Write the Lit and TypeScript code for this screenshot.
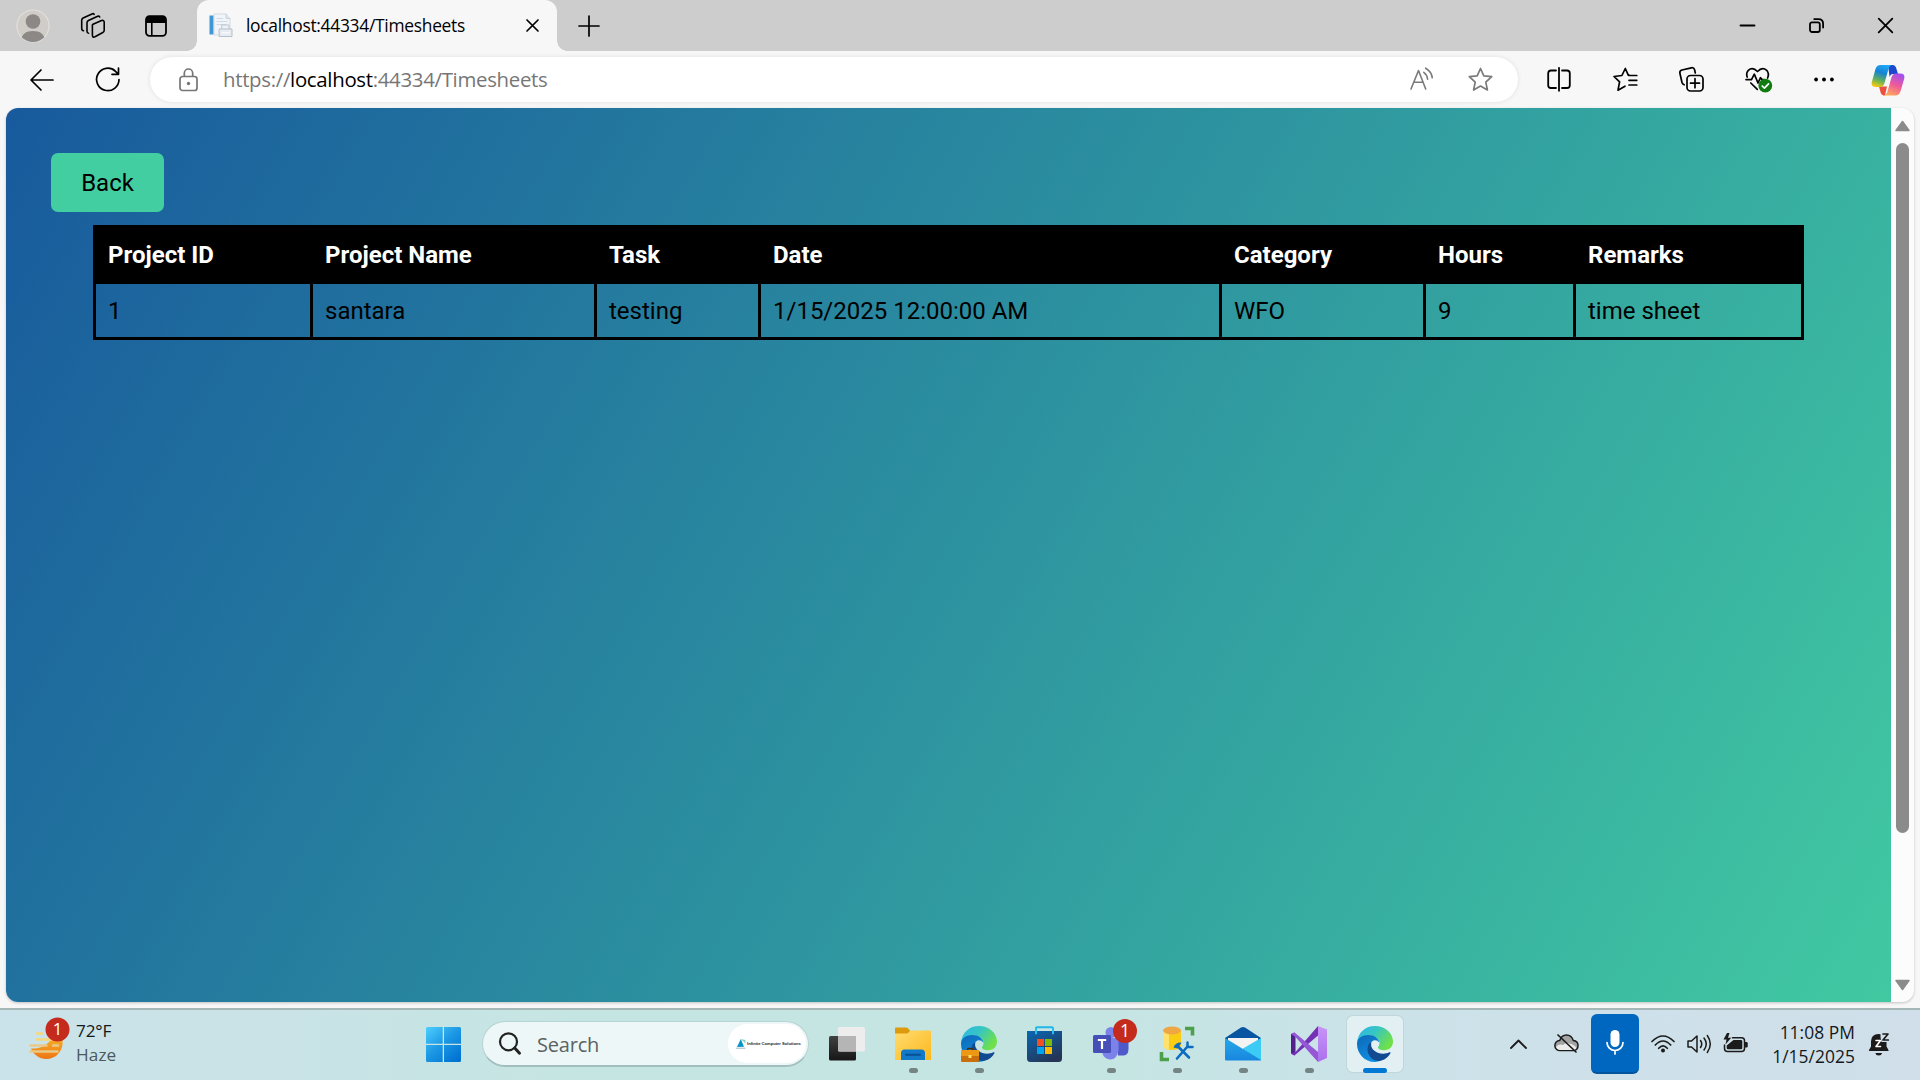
import { LitElement, html, css, svg, TemplateResult } from "lit";
import { customElement } from "lit/decorators.js";

const icon = (w: number, h: number, body: TemplateResult) =>
  html`<svg width=${w} height=${h} viewBox="0 0 ${w} ${h}" fill="none" stroke-linecap="round" stroke-linejoin="round">${body}</svg>`;

const base = css`
  :host { display: block; box-sizing: border-box; font-family: "Open Sans", "Noto Sans", sans-serif; color: #000; }
  * { box-sizing: border-box; }
  svg { display: block; flex: none; overflow: visible; }
`;

/* ---------- title bar and address bar ---------- */

@customElement("browser-chrome")
class BrowserChrome extends LitElement {
  static styles = [base, css`
    .titlebar { display: flex; height: 51px; background: #cdcdcd; }
    .lead { display: flex; width: 197px; padding-left: 15px; align-items: center; }
    .lead .slot { display: flex; justify-content: center; }
    .avatar { width: 36px; }
    .spaces { width: 84px; }
    .tabs { width: 42px; }
    .tab { position: relative; display: flex; align-items: center; width: 360px; padding: 0 18px 0 11px; background: #f7f7f7; border-radius: 12px 12px 0 0; }
    .tab::before, .tab::after { content: ""; position: absolute; bottom: 0; width: 10px; height: 10px; }
    .tab::before { left: -10px; background: radial-gradient(circle at 0 0, transparent 9.5px, #f7f7f7 10px); }
    .tab::after { right: -10px; background: radial-gradient(circle at 100% 0, transparent 9.5px, #f7f7f7 10px); }
    .title { margin-left: 13px; flex: 1; font-size: 17.4px; letter-spacing: -0.28px; line-height: 51px; white-space: nowrap; }
    .plus { display: flex; align-items: center; margin-left: 21px; }
    .controls { display: flex; margin-left: auto; }
    .controls div { width: 69px; display: flex; align-items: center; justify-content: center; }
    .toolbar { display: flex; height: 57px; background: #f7f7f7; align-items: center; }
    .nav { display: flex; width: 150px; padding-left: 30px; gap: 42px; align-items: center; }
    .address { display: flex; align-items: center; width: 1368px; height: 45px; padding: 0 25px 0 29px; border-radius: 23px; background: #fff; box-shadow: 0 0 5px #00000018; }
    .url { margin-left: 25px; flex: 1; font-size: 20.4px; letter-spacing: -0.31px; line-height: 45px; color: #767676; white-space: nowrap; }
    .url b { font-weight: 400; color: #000; }
    .read { margin-right: 34px; }
    .actions { display: flex; margin-left: 8px; }
    .actions div { width: 66.300px; display: flex; align-items: center; justify-content: center; }
    .actions div:last-child { width: 61px; }
  `];

  render() {
    return html`
      <div class="titlebar">
        <div class="lead">
          <div class="slot avatar">${icon(34, 34, svg`
            <defs><clipPath id="av"><circle cx="17" cy="17" r="16"/></clipPath></defs>
            <circle cx="17" cy="17" r="16" fill="#d0cdc9" stroke="#e3e0dc" stroke-width="1.2"/>
            <g clip-path="url(#av)" fill="#8c8885"><circle cx="17" cy="12.5" r="7.3"/><path d="M4.500 35c0-9.500 5-13 12.500-13s12.500 3.500 12.500 13z"/></g>`)}</div>
          <div class="slot spaces">${icon(26, 26, svg`
            <g stroke="#000" stroke-width="1.6">
              <path d="M12.500 11.500 21.500 7.600q2.700-.8 2.700 1.700v7.900q0 1.600-1.400 2.300l-7.800 4.300q-2.600 1.100-2.600-1.500v-8.600q0-1.500.1-2.200z"/>
              <path d="M8.600 20.300q-1.600-.1-1.600-2V9.800q0-1.600 1.400-2.300l9.300-4.300q1.400-.5 2 .8"/>
              <path d="M3.500 17.700Q1.700 17.500 1.700 15.300V7.300q0-1.600 1.400-2.300L12 .9q1.500-.6 2.100.5"/>
            </g>`)}</div>
          <div class="slot tabs">${icon(22, 22, svg`
            <rect x="1" y="1.200" width="20" height="19.600" rx="3.500" stroke="#000" stroke-width="1.8"/>
            <path d="M1 8V4.500Q1 1 4.500 1h13Q21 1 21 4.500V8z" fill="#000"/><path d="M6.800 8v12.500" stroke="#000" stroke-width="1.600"/>`)}</div>
        </div>
        <div class="tab">
          ${icon(25, 25, svg`
            <rect x="1.500" y="2.500" width="4" height="19" fill="#3f98d3"/>
            <path d="M6.500 1H18l4 4.500V22H6.500z" fill="#f1f5f9" stroke="#ccd4dc" stroke-width=".8"/>
            <path d="M18 1v4.500h4" fill="#dfe6ee" stroke="#c3ccd6" stroke-width=".8"/>
            <path d="M9 5.500h6M9 8.500h10M9 11.500h9" stroke="#d0dae5" stroke-width="1.200"/>
            <rect x="14" y="12" width="7" height="6" fill="#edf1f5" stroke="#b5bec9" stroke-width=".8"/>
            <rect x="11.500" y="16" width="12.500" height="7.500" fill="#e7ecf2" stroke="#b0bac6" stroke-width=".9"/>
            <path d="M14 19.800h7.500" stroke="#fff"/>`)}
          <span class="title">localhost:44334/Timesheets</span>
          ${icon(13, 13, svg`<path d="M1 1l11 11M12 1 1 12" stroke="#000" stroke-width="1.700"/>`)}
        </div>
        <div class="plus">${icon(22, 22, svg`<path d="M11 1v20M1 11h20" stroke="#000" stroke-width="1.700"/>`)}</div>
        <div class="controls">
          <div>${icon(15, 15, svg`<path d="M.5 7.500h14" stroke="#000" stroke-width="1.800"/>`)}</div>
          <div>${icon(15, 15, svg`<g stroke="#000" stroke-width="1.800"><rect x="1" y="4.300" width="9.800" height="9.700" rx="2"/><path d="M5.200 1.100h4.300q4.600 0 4.600 4.600v3.800"/></g>`)}</div>
          <div>${icon(15, 15, svg`<path d="M.7.700l13.600 13.600M14.300.700.700 14.300" stroke="#000" stroke-width="1.800"/>`)}</div>
        </div>
      </div>
      <div class="toolbar">
        <div class="nav">
          ${icon(24, 22, svg`<path d="M23 11H1.500M11 1 1 11l10 10" stroke="#000" stroke-width="1.700"/>`)}
          ${icon(25, 25, svg`<path d="M23 12.500A11.200 11.200 0 1 1 19.500 4.300L22.200 7M22.500 1v6.300h-6.500" stroke="#000" stroke-width="1.700"/>`)}
        </div>
        <div class="address">
          ${icon(19, 24, svg`<rect x="1" y="8.500" width="17" height="14" rx="2.500" stroke="#767676" stroke-width="1.700"/><path d="M5.300 8V5.200a4.200 4.200 0 0 1 8.400 0V8" stroke="#767676" stroke-width="1.700"/><circle cx="9.500" cy="15.500" r="1.700" fill="#767676"/>`)}
          <span class="url">https://<b>localhost</b>:44334/Timesheets</span>
          <span class="read">${icon(24, 24, svg`<g stroke="#7a7a7a" stroke-width="1.600"><path d="M1 21 8.500 2.500 15.700 21M3.800 14.300h9.400"/><path d="M12.500 4.300q3.400 2.400 3.800 7M14.300.2q5.900 3.300 6.700 9.600" transform="translate(1.300 0)"/></g>`)}</span>
          ${icon(25, 25, svg`<path d="M12.500 1.500 15.800 8.800 23.700 9.700 17.800 15.200 19.400 23 12.500 19.100 5.600 23 7.200 15.200 1.300 9.700 9.200 8.800z" stroke="#7a7a7a" stroke-width="1.700"/>`)}
        </div>
        <div class="actions">
          <div>${icon(24, 25, svg`<g stroke="#000" stroke-width="1.800"><path d="M9 3.500H4Q1.200 3.500 1.200 6.300v11.900q0 2.800 2.800 2.800h5M15 3.500h5q2.800 0 2.800 2.800v11.900q0 2.800-2.800 2.800h-5"/><path d="M12 .8v23"/></g>`)}</div>
          <div>${icon(25, 25, svg`<path d="M15.800 8 15.300 8.200 12.300 1.500 8.900 8.500 1 9.500 6.600 14.900 5 23.200 12 19.200M16 8.500h7.800M16 13.300h7.800M16 18h7.800" stroke="#000" stroke-width="1.700"/>`)}</div>
          <div>${icon(25, 25, svg`<g stroke="#000" stroke-width="1.700"><path d="M5.200 17.800Q3.500 17.300 3 15.500L.9 6.300Q.4 3.700 3 3L12.300.8q2.600-.5 3.300 2L16.300 6"/><rect x="8" y="8.500" width="16" height="15.500" rx="3.500"/><path d="M16 11.700v9M11.500 16.200h9"/></g>`)}</div>
          <div>${icon(27, 26, svg`<g stroke="#000" stroke-width="1.700"><path d="M2.200 10Q.8 6 3.300 3.300 7.700-.6 12.500 4.500 17.300-.6 21.700 3.300 24.500 6.500 22.600 11"/><path d="M1 12.600h5.500L9.300 7.200 13 16 15.500 10.700 17 12.600h2.200M5.800 16 12.300 22.300"/></g><circle cx="20.300" cy="18.700" r="6.900" fill="#107c10"/><path d="M17.200 19l2.200 2.100 4.100-4.300" stroke="#fff" stroke-width="1.700"/>`)}</div>
          <div>${icon(20, 6, svg`<g fill="#000"><circle cx="2.100" cy="2.500" r="1.900"/><circle cx="10" cy="2.500" r="1.900"/><circle cx="17.900" cy="2.500" r="1.900"/></g>`)}</div>
          <div>${icon(34, 32, svg`
            <defs>
              <linearGradient id="c1" x1=".6" y1="0" x2=".3" y2="1"><stop stop-color="#1ea8f4"/><stop offset=".35" stop-color="#1682d4"/><stop offset=".7" stop-color="#62b25b"/><stop offset="1" stop-color="#f5c90e"/></linearGradient>
              <linearGradient id="c2" x1=".7" y1="0" x2=".3" y2="1"><stop stop-color="#a34ff0"/><stop offset=".5" stop-color="#ee5a9a"/><stop offset="1" stop-color="#ffa85a"/></linearGradient>
            </defs>
            <path d="M17 1h5q2.200 0 3 2.500l2 6.500h-5q-2.500 0-3.400 3z" fill="#1b48cc"/>
            <path d="M8 22.500h8L14 31.500q-3.500 0-4.300-2.800z" fill="#ec5140"/>
            <path d="M9.500 1H21q-2.500.5-3.500 4l-4 14q-1.100 4-4.300 4H4.800Q-.3 23 .8 18L4.500 5Q5.800 1 9.500 1z" fill="url(#c1)"/>
            <path d="M24.500 31.500H12.500q3-.5 4-4L20.500 13.300q1.200-3.800 4.500-3.800H29q5.500 0 4.200 5.200l-3.700 12.600q-1.300 4.200-5 4.200z" fill="url(#c2)"/>`)}</div>
        </div>
      </div>`;
  }
}

/* ---------- page shown in the browser ---------- */

interface Entry { id: string; name: string; task: string; date: string; category: string; hours: string; remarks: string; }

@customElement("timesheet-page")
class TimesheetPage extends LitElement {
  static styles = [base, css`
    :host { padding: 0 6px 6px; background: #f7f7f7; height: 900px; }
    .view { display: flex; height: 894px; border-radius: 12px; overflow: hidden; background: #fcfcfc; box-shadow: 0 1px 3px #00000038; }
    .page { width: 1885px; overflow: hidden; }
    .canvas { height: 1084px; padding: 45px; background: linear-gradient(120deg, #185a9d, #43cea2); font-family: Roboto, sans-serif; font-size: 24px; }
    .back { display: block; width: 113px; height: 59px; padding: 0; border: 0; border-radius: 7px; background: #43cea2; font: inherit; color: #000; }
    .table { display: grid; grid-template-columns: 217px 284px 164px 461px 204px 150px 231px; width: 1711px; margin: 13px 0 0 42px; }
    .th { height: 59px; padding-left: 15px; line-height: 60px; background: #000; color: #fff; font-weight: 700; }
    .td { height: 56px; padding-left: 12px; line-height: 55px; border: solid #000; border-width: 0 0 3px 3px; }
    .td:last-child { border-right-width: 3px; }
    .scroll { display: flex; flex-direction: column; align-items: center; width: 23px; padding: 12px 0 11px; }
    .thumb { width: 13px; height: 690px; margin: 11px 0 auto; border-radius: 7px; background: #8b8b8b; }
  `];

  private entries: Entry[] = [
    { id: "1", name: "santara", task: "testing", date: "1/15/2025 12:00:00 AM", category: "WFO", hours: "9", remarks: "time sheet" },
  ];

  render() {
    const heads = ["Project ID", "Project Name", "Task", "Date", "Category", "Hours", "Remarks"];
    return html`
      <div class="view">
        <div class="page"><div class="canvas">
          <button class="back">Back</button>
          <div class="table">
            ${heads.map((h) => html`<div class="th">${h}</div>`)}
            ${this.entries.map((e) => [e.id, e.name, e.task, e.date, e.category, e.hours, e.remarks].map((v) => html`<div class="td">${v}</div>`))}
          </div>
        </div></div>
        <div class="scroll">
          ${icon(15, 12, svg`<path d="M7.500 1.500 14 10.500H1z" fill="#8b8b8b" stroke="#8b8b8b" stroke-width="1.500"/>`)}
          <div class="thumb"></div>
          ${icon(15, 12, svg`<path d="M7.500 10.500 14 1.500H1z" fill="#8b8b8b" stroke="#8b8b8b" stroke-width="1.500"/>`)}
        </div>
      </div>`;
  }
}

/* ---------- taskbar ---------- */

const edgeArt = (p: string) => svg`
  <defs>
    <linearGradient id="${p}a" x1="0" y1="0" x2="1" y2=".5"><stop stop-color="#2fb5e8"/><stop offset=".5" stop-color="#36c6c4"/><stop offset="1" stop-color="#6fe04a"/></linearGradient>
    <linearGradient id="${p}b" x1="0" y1="0" x2=".5" y2="1"><stop stop-color="#0d68b8"/><stop offset="1" stop-color="#0f8fe0"/></linearGradient>
  </defs>
  <path d="M0 17C1 6 8.500 0 18 0c10.500 0 18 7.500 18 15.500 0 5.500-4 8.700-8.700 8.700-3.600 0-6.300-1.200-6.300-2.700 0-1 1.500-1.600 1.500-4.200 0-4-4-7.800-9.300-7.800C7 9.500 1.500 12.500 0 17z" fill="url(#${p}a)"/>
  <path d="M0 18C0 12 5.500 9 11.500 9c6 0 10.500 3.500 10.800 7.600C21 14.500 18.500 13.700 16.500 14.400c-3 1.300-4 4.300-3.600 7.600.7 6 5.600 10.600 12.100 11.800C22.500 35.500 20 36 17.500 36 8 36 0 28 0 18z" fill="url(#${p}b)"/>
  <path d="M14.500 16c-4 2-5 7-3 12 2.300 5.500 8 8 13 6.600 4-1.200 7-4 8.800-7.200.5-1-.2-1.500-1-1.100-2 1-3.800 1.400-6 1.400-7 0-12.500-4.700-12.200-9.200 0-1 .1-1.700.4-2.500z" fill="#114a91"/>`;

@customElement("task-bar")
class TaskBar extends LitElement {
  static styles = [base, css`
    :host { display: flex; align-items: stretch; height: 72px; border-top: 2px solid #a6b7b8; color: #14181a;
      background: linear-gradient(90deg, #cae3ea 0%, #c9e3e6 15%, #c5e5e2 30%, #c5e5e3 58%, #c9e3e7 68%, #cde1e9 78%, #d0dfe9 100%); }
    .weather { display: flex; width: 410px; padding-left: 29px; }
    .weather svg { margin-top: 7px; }
    .lines { margin-left: 11px; padding-top: 9px; font-size: 17.200px; line-height: 24px; letter-spacing: -0.15px; }
    .haze { color: #4d595c; letter-spacing: 0.1px; }
    .start { display: flex; align-items: center; width: 72px; padding: 0 0 1px 16px; }
    .search { display: flex; align-items: center; width: 327px; height: 46px; margin-top: 11px; padding: 0 2px 0 16px; border-radius: 23px; background: #eef7f7; border: 1px solid #b7d3d3; border-bottom: 2px solid #a2bebe; }
    .search .label { margin-left: 16px; flex: 1; padding-top: 2px; color: #5a6262; font-size: 20px; letter-spacing: -0.2px; line-height: 42px; }
    .brand { display: flex; align-items: center; gap: 1px; flex: none; width: 78px; height: 39px; padding-left: 8px; border-radius: 20px; background: #fff; font: 700 4.100px "Liberation Sans", sans-serif; color: #222; white-space: nowrap; }
    .apps { display: flex; margin-left: 5px; }
    .app { position: relative; display: flex; align-items: center; justify-content: center; width: 66px; }
    .run::after { content: ""; position: absolute; bottom: 7px; width: 9px; height: 5px; border-radius: 3px; background: #748583; }
    .active::before { content: ""; position: absolute; top: 6px; left: 5px; width: 56px; height: 56px; border-radius: 6px; background: #e3f0f3; box-shadow: 0 0 0 1px #c1d6d9; }
    .active::after { width: 24px; background: #0078d4; }
    .app svg { position: relative; top: -1px; }
    .app .store { padding-right: 1px; }
    .tray { display: flex; align-items: center; margin-left: 102px; }
    .tray svg { position: relative; top: -1px; }
    .more { margin-right: 27px; }
    .mic { display: flex; align-items: center; justify-content: center; width: 48px; height: 60px; margin: 0 12px; margin-top: -2px; border-radius: 6px; background: #0067c0; border-bottom: 2px solid #00539c; }
    .status { display: flex; align-items: center; gap: 12px; }
    .clock { width: 107px; padding-bottom: 3px; text-align: right; font-size: 17.400px; line-height: 24px; letter-spacing: 0.05px; }
    .bell { margin-left: 13px; }
  `];

  render() {
    return html`
      <div class="weather">
        ${icon(36, 46, svg`
          <defs><linearGradient id="sun" x1="0" y1="0" x2="0" y2="1"><stop stop-color="#f6bc2d"/><stop offset="1" stop-color="#ee7414"/></linearGradient></defs>
          <path d="M20 25Q24 19 31 17q4 6 2 13c-2 7-8 12-15.500 12S4 37 2 31.500q10 1 18-6.500z" fill="url(#sun)"/>
          <path d="M8 16.500h5M8 22.500h15" stroke="#f7d77b" stroke-width="2.400"/><path d="M1.500 28.500h16M24 28.500h5M1.500 34.500h27" stroke="#eac988" stroke-width="2.400"/>
          <circle cx="28.500" cy="12.500" r="12" fill="#c42b1c"/><text x="28.700" y="18.400" text-anchor="middle" font-size="17" fill="#fff">1</text>`)}
        <div class="lines"><div>72°F</div><div class="haze">Haze</div></div>
      </div>
      <div class="start">${icon(35, 35, svg`
        <defs><linearGradient id="w" gradientUnits="userSpaceOnUse" x1="0" y1="0" x2="30" y2="35"><stop stop-color="#4ecfff"/><stop offset=".5" stop-color="#1c98e4"/><stop offset="1" stop-color="#0072d2"/></linearGradient></defs>
        <g fill="url(#w)"><path d="M1.500 0H16.700V16.700H0V1.500Q0 0 1.500 0zM18 0h15.500Q35 0 35 1.500V16.700H18zM0 18h16.700V35H1.500Q0 35 0 33.500zM18 18h17v15.500q0 1.500-1.500 1.500H18z"/></g>`)}</div>
      <div class="search">
        ${icon(22, 23, svg`<circle cx="9.500" cy="9.800" r="8.500" stroke="#222" stroke-width="2.200"/><path d="M15.700 16 20.500 21.200" stroke="#222" stroke-width="3"/>`)}
        <span class="label">Search</span>
        <div class="brand">${icon(10, 10, svg`<path d="M1 8 4.800 0 8 7.800z" fill="#0794c9"/><path d="M4.800 0 9.500 1v3.500z" fill="#8fd0bd"/><path d="M.5 9.200h8.500" stroke="#9bb8c1"/>`)}<span>Infinite Computer Solutions</span></div>
      </div>
      <div class="apps">
        <div class="app">${icon(36, 34, svg`
          <defs><linearGradient id="tv" x1="0" y1="0" x2="0" y2="1"><stop stop-color="#414141"/><stop offset="1" stop-color="#161616"/></linearGradient></defs>
          <rect x="0" y="9" width="27" height="24.500" rx="1.500" fill="url(#tv)"/><rect x="9" y="0" width="27" height="24.500" rx="1.500" fill="#ededed"/><path d="M9 9H27V24.500H10.500Q9 24.500 9 23z" fill="#b5b5b5"/>`)}</div>
        <div class="app run">${icon(36, 34, svg`
          <defs><linearGradient id="fo" x1="0" y1="0" x2="1" y2="1"><stop stop-color="#ffdc72"/><stop offset="1" stop-color="#fcb81b"/></linearGradient></defs>
          <path d="M0 1.500Q0 .5 1 .5h10q1.500 0 2.200 1L15.300 4v5H0z" fill="#dc9a0c"/><path d="M0 6.500h11.500Q13 6.500 14 5l1.300-1.500H35q1 0 1 1V33H0z" fill="url(#fo)"/>
          <path d="M6 33V26q0-3.500 3.500-3.500h17q3.500 0 3.500 3.500v7z" fill="#1278c8"/><path d="M11 27.700h14" stroke="#084f93" stroke-width="2"/>`)}</div>
        <div class="app run">${icon(36, 36, svg`${edgeArt("e")}
          <path d="M6.500 25v-1.500q0-1 1-1h3q1 0 1 1V25" stroke="#4a2b05" stroke-width="1.500"/><rect x="0" y="24" width="18" height="12" rx="1" fill="#c9700c"/><path d="M0 24h18v6H0z" fill="#ed9815"/><rect x="7.500" y="29" width="3" height="3" fill="#ffe066"/>`)}</div>
        <div class="app"><div class="store">${icon(35, 36, svg`
          <defs><linearGradient id="st" x1="0" y1="0" x2=".6" y2="1"><stop stop-color="#0968b4"/><stop offset="1" stop-color="#243557"/></linearGradient></defs>
          <path d="M9 7V2.200q0-1 1-1h15q1 0 1 1V7" stroke="#20b7ea" stroke-width="1.900"/>
          <path d="M0 5H35V32.500Q35 36 31.500 36h-28Q0 36 0 32.500z" fill="url(#st)"/><path d="M9 4.500v3M26 4.500v3" stroke="#28c4f4" stroke-width="1.900"/>
          <rect x="10" y="13" width="7" height="7" fill="#f25022"/><rect x="18" y="13" width="7" height="7" fill="#7fba00"/><rect x="10" y="21" width="7" height="7" fill="#00a4ef"/><rect x="18" y="21" width="7" height="7" fill="#ffb900"/>`)}</div></div>
        <div class="app run">${icon(36, 36, svg`
          <circle cx="18" cy="6.500" r="5.500" fill="#7b83eb"/><path d="M25 12h10.500V23q0 6-5 6.500H25z" fill="#5059c9"/>
          <path d="M10 12h15.500v12.500q-1.500 9-8 9-6.500-.5-8-6z" fill="#7b83eb"/>
          <rect x="0" y="9" width="18" height="18" rx="1.500" fill="#464eb8"/><path d="M4.800 14h8.400M9 14v9" stroke="#fff" stroke-width="2.200" stroke-linecap="butt"/>
          <circle cx="32" cy="5" r="12" fill="#c42b1c"/><text x="32" y="11" text-anchor="middle" font-size="17.500" fill="#fff">1</text>`)}</div>
        <div class="app run">${icon(35, 36, svg`
          <path d="M3 4.500V20q2 4 9 4t9-4V4.500z" fill="#f9cd14"/><path d="M3 4.500V20q1 3 6 4V5z" fill="#ffe26b"/><ellipse cx="12" cy="4.500" rx="9" ry="4" fill="#efa745"/>
          <path d="M25 2.500h7.500V9.500M1.500 26v7.500H9" stroke="#4ca04a" stroke-width="3.600" stroke-linecap="butt" stroke-linejoin="miter"/>
          <path d="M17 32.500 27.500 20.500M29 31.500 18 20.500" stroke="#0d6cbd" stroke-width="2.600"/><path d="M13.500 21.500Q16 16 21.500 16.700L17.500 22.500z" fill="#0d6cbd"/><path d="M27.500 16.500v4.500h5" stroke="#0d6cbd" stroke-width="2.500"/>`)}</div>
        <div class="app run">${icon(36, 36, svg`
          <defs><linearGradient id="ml" x1="0" y1="0" x2="0" y2="1"><stop stop-color="#28a7e8"/><stop offset="1" stop-color="#1787df"/></linearGradient></defs>
          <path d="M0 12 16 1.500q2-1.200 4 0L36 12v3H0z" fill="#0855a1"/><path d="M3 12h30v4L18 25 3 16z" fill="#f3f3f3"/>
          <path d="M36 12v22H18V22.500z" fill="#3ccbf4"/><path d="M0 12 36 34v.5H1Q0 34.500 0 33.500z" fill="url(#ml)"/>`)}</div>
        <div class="app run">${icon(36, 36, svg`
          <defs><linearGradient id="vs" x1="0" y1="0" x2="0" y2="1"><stop stop-color="#c795f7"/><stop offset="1" stop-color="#ab70ec"/></linearGradient></defs>
          <path d="M0 8 3.500 6.500 4.500 9v18l-1 2.500L0 27.500z" fill="#52218a"/>
          <path d="M0 27.500 4.500 26 27 0v9.500L3.500 29.500z" fill="#7431b5"/>
          <path d="M0 8 3.500 6.500 27 26v10L4.500 11z" fill="#9557d6"/>
          <path d="M27 0 36 3.500v28.500L27 36z" fill="url(#vs)"/>`)}</div>
        <div class="app run active">${icon(36, 36, edgeArt("f"))}</div>
      </div>
      <div class="tray">
        <div class="more">${icon(17, 10, svg`<path d="M1 9 8.500 1.500 16 9" stroke="#1b1b1b" stroke-width="1.800"/>`)}</div>
        ${icon(25, 20, svg`
          <path d="M6 16.500a5 5 0 0 1-.3-10Q7.500 1 12.500 1t6.800 5.500q4.700.5 4.700 5t-4.500 5z" fill="#a3a3a3" stroke="#1b1b1b" stroke-width="1.500"/>
          <path d="M2 13Q5 9.500 9 11q3-3 6-1.500 5 .5 7.500 4.500-1 2-3 2H6q-3 0-4-3z" fill="#ececec"/><path d="M4 1 22 18" stroke="#1b1b1b" stroke-width="1.700"/>`)}
        <div class="mic">${icon(18, 25, svg`<rect x="4.500" y="0" width="9" height="17" rx="4.500" fill="#fff"/><path d="M1 12.500a8 8 0 0 0 16 0M9 20.500V24" stroke="#fff" stroke-width="1.700"/>`)}</div>
        <div class="status">
          ${icon(24, 18, svg`<g stroke="#1b1b1b" stroke-width="1.700"><path d="M1 6.500Q12-4.500 23 6.500M4.300 10Q12 2 19.700 10M7.700 13.300Q12 8.500 16.300 13.300"/></g><circle cx="12" cy="15.500" r="2" fill="#1b1b1b"/>`)}
          ${icon(24, 20, svg`<path d="M1 7h3.500L10 2v16l-5.500-5H1zM13.500 6.500q2.500 3.500 0 7M17 4q4.500 6 0 12M20.300 1.500q6 8.500 0 17" stroke="#1b1b1b" stroke-width="1.500"/>`)}
          ${icon(25, 20, svg`<path d="M9.500 3.800H18.500Q21.500 3.800 21.500 6.800v7.700q0 3-3 3h-14q-3 0-3-3V11" stroke="#1b1b1b" stroke-width="1.500"/><path d="M10.500 6h7.500q1.300 0 1.300 1.300v6.700q0 1.300-1.300 1.300H5q-1.300 0-1.300-1.300V11.500z" fill="#1b1b1b"/><path d="M22 8h1.500q1.200 0 1.200 1.200v3q0 1.200-1.200 1.200H22z" fill="#1b1b1b"/><path d="M4-1 .5 5.500h3L2.500 10.500 8.200 3.800H5L6.500-1z" fill="#1b1b1b"/>`)}
        </div>
        <div class="clock"><div>11:08 PM</div><div>1/15/2025</div></div>
        <div class="bell">${icon(22, 23, svg`
          <path d="M1 17 3 13.500V8.500Q3.200 1 10.500 1q1 0 2 .3V4.500l1 4.500H18.500V13.500l2 3.500v1H1z" fill="#1b1b1b"/><path d="M7.300 20h6.800Q13.500 22.500 10.700 22.500t-3.400-2.500z" fill="#1b1b1b"/>
          <path d="M15 1h5l-5 6h5.300" stroke="#1b1b1b" stroke-width="1.700"/><path d="M8 7.500h4.500l-4.500 6h4.500" stroke="#fff" stroke-width="1.600"/>`)}</div>
      </div>`;
  }
}

@customElement("app-root")
class AppRoot extends LitElement {
  static styles = css`
    :host { display: flex; flex-direction: column; width: 1920px; height: 1080px; overflow: hidden; background: #f7f7f7; }
  `;
  render() {
    return html`<browser-chrome></browser-chrome><timesheet-page></timesheet-page><task-bar></task-bar>`;
  }
}
